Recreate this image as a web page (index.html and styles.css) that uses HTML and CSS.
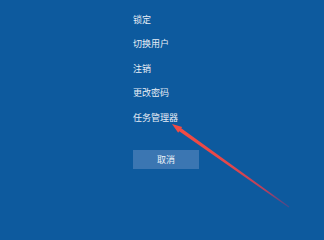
FILE: index.html
```html
<!DOCTYPE html>
<html lang="zh-CN">
<head>
<meta charset="utf-8">
<link rel="stylesheet" href="styles.css">
</head>
<body>
<div class="screen">
  <ul class="menu">
    <li>锁定</li>
    <li>切换用户</li>
    <li>注销</li>
    <li>更改密码</li>
    <li>任务管理器</li>
  </ul>
  <div class="cancel">取消</div>
  <svg class="arrow" width="324" height="223" viewBox="0 0 324 223">
    <defs>
      <linearGradient id="g" x1="172" y1="124" x2="289" y2="207" gradientUnits="userSpaceOnUse">
        <stop offset="0" stop-color="#f44c42"/>
        <stop offset="0.5" stop-color="#e4474a"/>
        <stop offset="0.8" stop-color="#b6405e"/>
        <stop offset="1" stop-color="#6e3f80" stop-opacity="0.6"/>
      </linearGradient>
    </defs>
    <polygon fill="url(#g)" points="172,124 182.2,126.9 181.2,128.3 289.35,206.51 288.65,207.49 179.2,131.3 178.2,132.7"/>
  </svg>
</div>
</body>
</html>
```
FILE: styles.css
```css
html, body {
  margin: 0;
  padding: 0;
}
body {
  background: #0d5a9e;
  font-family: "Noto Sans CJK SC", "Noto Sans", sans-serif;
  color: #e8eef6;
}
.screen {
  position: relative;
  width: 324px;
  height: 223px;
  overflow: hidden;
  padding: 7.75px 0 0 133px;
  box-sizing: border-box;
}
.menu {
  list-style: none;
  margin: 0;
  padding: 0;
  display: flex;
  flex-direction: column;
}
.menu li {
  height: 24.5px;
  line-height: 24.5px;
  font-size: 9px;
}
.cancel {
  margin-top: 20px;
  width: 66px;
  height: 19px;
  line-height: 19px;
  background: #3b76b2;
  text-align: center;
  font-size: 9px;
  color: #eef3f9;
}
.arrow {
  position: absolute;
  left: 0;
  top: 0;
}
```
